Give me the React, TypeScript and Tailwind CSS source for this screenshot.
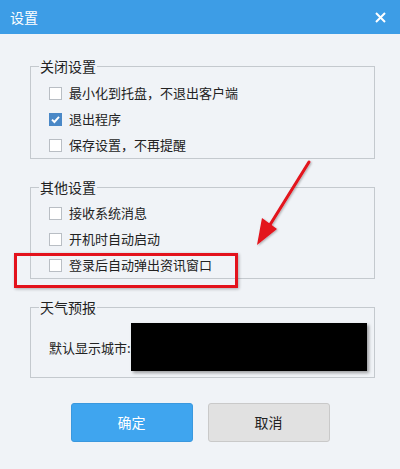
import React, { useState } from 'react';

const font = { fontFamily: '"Noto Sans CJK SC", "Microsoft YaHei", sans-serif' };

const Check = ({ checked, label, onToggle }: { checked: boolean; label: string; onToggle: () => void }) => (
  <label className="flex items-center h-[26px] gap-[7px] pl-[18px] cursor-pointer" onClick={onToggle}>
    {checked ? (
      <span className="w-[13px] h-[13px] bg-[#4a88c7] flex items-center justify-center">
        <svg width="11" height="11" viewBox="0 0 11 11">
          <path d="M2 5.6 L4.4 8 L9 2.8" fill="none" stroke="#fff" strokeWidth="1.9" />
        </svg>
      </span>
    ) : (
      <span className="w-[13px] h-[13px] bg-white border border-[#b9bec4]" />
    )}
    <span className="text-[13px] text-[#222]">{label}</span>
  </label>
);

const Group = ({ title, children, className = '' }: { title: string; children: React.ReactNode; className?: string }) => (
  <fieldset className={`ml-[30px] w-[345px] border border-[#c4c9ce] ${className}`}>
    <legend className="ml-[8px] px-[1px] text-[14px] leading-[18px] text-[#222]">{title}</legend>
    {children}
  </fieldset>
);

export default function App() {
  const [opts, setOpts] = useState<Record<string, boolean>>({
    tray: false,
    quit: true,
    remember: false,
    sysmsg: false,
    autostart: false,
    news: false,
  });
  const toggle = (k: string) => setOpts((o) => ({ ...o, [k]: !o[k] }));

  return (
    <div className="relative w-[400px] h-[469px] bg-[#f0f3f7] overflow-hidden select-none" style={font}>
      <div className="h-[34px] bg-[#3d9de6] flex items-center justify-between pl-[10px] pr-[14px]">
        <span className="text-white text-[14px]">设置</span>
        <svg width="11" height="11" viewBox="0 0 11 11">
          <path d="M1 1 L10 10 M10 1 L1 10" stroke="#fff" strokeWidth="2" />
        </svg>
      </div>

      <Group title="关闭设置" className="mt-[23px] pt-[5px]">
        <Check checked={opts.tray} label="最小化到托盘，不退出客户端" onToggle={() => toggle('tray')} />
        <Check checked={opts.quit} label="退出程序" onToggle={() => toggle('quit')} />
        <Check checked={opts.remember} label="保存设置，不再提醒" onToggle={() => toggle('remember')} />
      </Group>

      <Group title="其他设置" className="mt-[19px] pt-[4px]">
        <Check checked={opts.sysmsg} label="接收系统消息" onToggle={() => toggle('sysmsg')} />
        <Check checked={opts.autostart} label="开机时自动启动" onToggle={() => toggle('autostart')} />
        <Check checked={opts.news} label="登录后自动弹出资讯窗口" onToggle={() => toggle('news')} />
      </Group>

      <Group title="天气预报" className="mt-[19px] pt-[7px] pb-[6px]">
        <div className="flex items-center pl-[18px] pr-[7px]">
          <span className="text-[13px] text-[#222] mt-[2px]">默认显示城市:</span>
          <div className="ml-auto w-[236px] h-[48px] bg-black shadow-[2px_2px_3px_rgba(0,0,0,0.35)]" />
        </div>
      </Group>

      <div className="flex justify-center gap-[15px] mt-[25px]">
        <button className="w-[122px] h-[39px] rounded-[3px] bg-[#3fa5ef] border border-[#3a98de] text-white text-[14px]">
          确定
        </button>
        <button className="w-[122px] h-[39px] rounded-[3px] bg-[#e1e1e1] border border-[#c9c9c9] text-[#222] text-[14px]">
          取消
        </button>
      </div>

      {/* annotation overlay */}
      <div className="absolute left-[14px] top-[253px] w-[224px] h-[35px] border-[3px] border-[#e3121c] shadow-[1px_1px_3px_rgba(0,0,0,0.3)]" />
      <svg className="absolute left-0 top-0 pointer-events-none" width="400" height="469">
        <defs>
          <filter id="sh" x="-20%" y="-20%" width="140%" height="140%">
            <feDropShadow dx="1" dy="1" stdDeviation="1" floodColor="#000" floodOpacity="0.3" />
          </filter>
        </defs>
        <g filter="url(#sh)">
          <line x1="309" y1="162" x2="268" y2="228" stroke="#e3121c" strokeWidth="3" strokeLinecap="round" />
          <path d="M257 245 L262 218 L277 229 Z" fill="#e3121c" />
        </g>
      </svg>
    </div>
  );
}
